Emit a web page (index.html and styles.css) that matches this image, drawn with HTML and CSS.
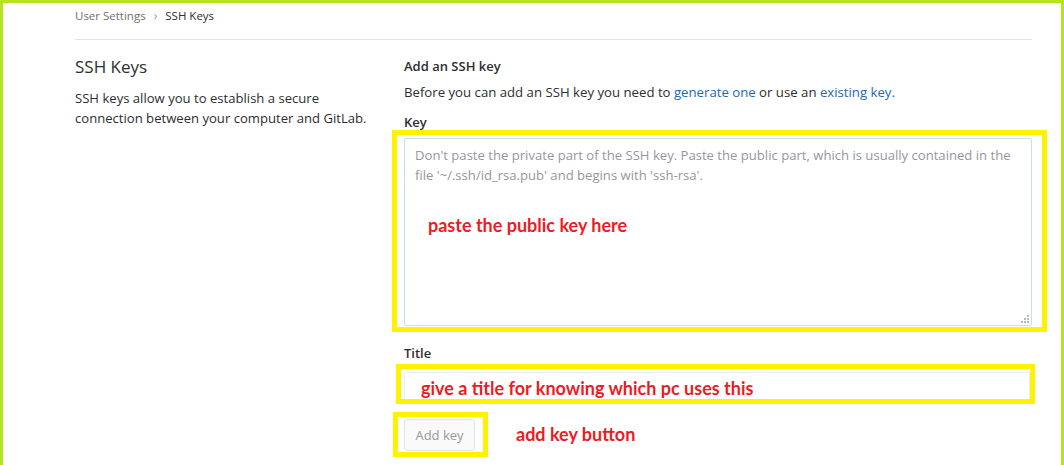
FILE: index.html
```html
<!DOCTYPE html>
<html lang="en">
<head>
    <meta charset="UTF-8">
    <meta name="viewport" content="width=device-width, initial-scale=1.0">
    <title>SSH Keys · User Settings</title>
    <link rel="stylesheet" href="styles.css">
</head>
<body>
    <div class="page">
        <div class="breadcrumb">
            <a href="#" class="crumb">User Settings</a>
            <span class="crumb-sep">›</span>
            <span class="crumb-current">SSH Keys</span>
        </div>

        <div class="settings-row">
            <div class="settings-left">
                <h4 class="settings-title">SSH Keys</h4>
                <p>SSH keys allow you to establish a secure<br>connection between your computer and GitLab.</p>
            </div>

            <div class="settings-right">
                <h5 class="form-heading">Add an SSH key</h5>
                <p class="form-intro">Before you can add an SSH key you need to <a href="#">generate one</a> or use an <a href="#">existing key.</a></p>

                <form class="key-form">
                    <label class="field-label" for="key">Key</label>
                    <div class="field field-key">
                        <textarea id="key" class="form-control key-area" placeholder="Don't paste the private part of the SSH key. Paste the public part, which is usually contained in the file '~/.ssh/id_rsa.pub' and begins with 'ssh-rsa'."></textarea>
                        <svg class="grip" width="8" height="8" viewBox="0 0 8 8">
                            <rect x="6" y="0" width="2" height="2" fill="#bbb"/>
                            <rect x="3" y="3" width="2" height="2" fill="#bbb"/>
                            <rect x="6" y="3" width="2" height="2" fill="#bbb"/>
                            <rect x="0" y="6" width="2" height="2" fill="#bbb"/>
                            <rect x="3" y="6" width="2" height="2" fill="#bbb"/>
                            <rect x="6" y="6" width="2" height="2" fill="#bbb"/>
                        </svg>
                        <div class="mark mark-key"></div>
                        <span class="note note-key">paste the public key here</span>
                    </div>

                    <label class="field-label field-label-title" for="title">Title</label>
                    <div class="field field-title">
                        <input id="title" class="form-control title-input" type="text">
                        <div class="mark mark-title"></div>
                        <span class="note note-title">give a title for knowing which pc uses this</span>
                    </div>

                    <div class="field field-submit">
                        <button type="submit" class="btn" disabled>Add key</button>
                        <div class="mark mark-btn"></div>
                        <span class="note note-btn">add key button</span>
                    </div>
                </form>
            </div>
        </div>
    </div>
</body>
</html>
```

FILE: styles.css
```css
html, body {
    height: 100%;
}

body {
    margin: 0;
    border: 3px solid #b5e61d;
    border-bottom: 0;
    box-sizing: border-box;
    font-family: "Open Sans", "Noto Sans", sans-serif;
    font-size: 13px;
    color: #2e2e2e;
    background: #fff;
    overflow: hidden;
}

.page {
    padding: 0 29px 0 72px;
}

.breadcrumb {
    display: flex;
    align-items: flex-start;
    gap: 8px;
    height: 32px;
    padding-top: 7px;
    margin-top: -3px;
    font-size: 11.5px;
    line-height: 18px;
    border-bottom: 1px solid #e5e5e5;
}

.crumb {
    color: #707070;
    text-decoration: none;
}

.crumb-sep {
    color: #999;
    font-size: 12px;
}

.crumb-current {
    color: #2e2e2e;
}

.settings-row {
    display: flex;
    padding-top: 13px;
}

.settings-left {
    width: 329px;
    flex-shrink: 0;
}

.settings-title {
    margin: 1px 0 8px;
    font-size: 17px;
    font-weight: 400;
    line-height: 26px;
}

.settings-left p {
    margin: 0;
    line-height: 20px;
    font-size: 13.1px;
    white-space: nowrap;
}

.settings-right {
    flex: 1;
}

.form-heading {
    margin: 3px 0 6px;
    font-size: 13px;
    font-weight: 600;
    line-height: 20px;
}

.form-intro {
    margin: 0 0 10px;
    line-height: 20px;
    font-size: 13.2px;
}

.form-intro a {
    color: #1b69b6;
    text-decoration: none;
}

.key-form {
    display: flex;
    flex-direction: column;
}

.field-label {
    font-weight: 600;
    line-height: 20px;
    margin-bottom: 6px;
}

.field-label-title {
    margin-top: 17px;
    margin-bottom: 9px;
}

.field {
    position: relative;
}

.form-control {
    display: block;
    box-sizing: border-box;
    width: 100%;
    font-family: inherit;
    font-size: 13px;
    color: #2e2e2e;
    background: #fff;
    border-radius: 2px;
}

.key-area {
    height: 188px;
    padding: 6px 10px;
    line-height: 20px;
    font-size: 13.1px;
    border: 1px solid #c6ddf2;
    resize: none;
}

.key-area::placeholder {
    color: #979797;
}

.grip {
    position: absolute;
    right: 3px;
    bottom: 3px;
}

.title-input {
    width: 626px;
    height: 29px;
    border: 1px solid #ececec;
    border-bottom: 2px solid #e0e0e0;
}

.field-submit {
    margin-top: 18px;
    align-self: flex-start;
}

.btn {
    display: block;
    width: 71px;
    height: 32px;
    font-family: inherit;
    font-size: 13px;
    color: #999;
    background: #fafafa;
    border: 1px solid #e3e3e3;
    border-radius: 3px;
}

/* paint-style annotations drawn over the form */
.mark {
    position: absolute;
    border: 5px solid #fff200;
    pointer-events: none;
}

.mark-key {
    left: -12px;
    top: -8px;
    width: 645px;
    height: 192px;
}

.mark-title {
    left: -8px;
    top: -8px;
    width: 629px;
    height: 30px;
}

.mark-btn {
    left: -11px;
    top: -7px;
    width: 85px;
    height: 35px;
}

.note {
    position: absolute;
    font-family: "Lato", sans-serif;
    font-weight: 700;
    font-size: 18px;
    line-height: 22px;
    color: #ed1c24;
    white-space: nowrap;
}

.note-key {
    left: 24px;
    top: 76px;
}

.note-title {
    left: 17px;
    top: 5px;
}

.note-btn {
    left: 112px;
    top: 4px;
}
```
